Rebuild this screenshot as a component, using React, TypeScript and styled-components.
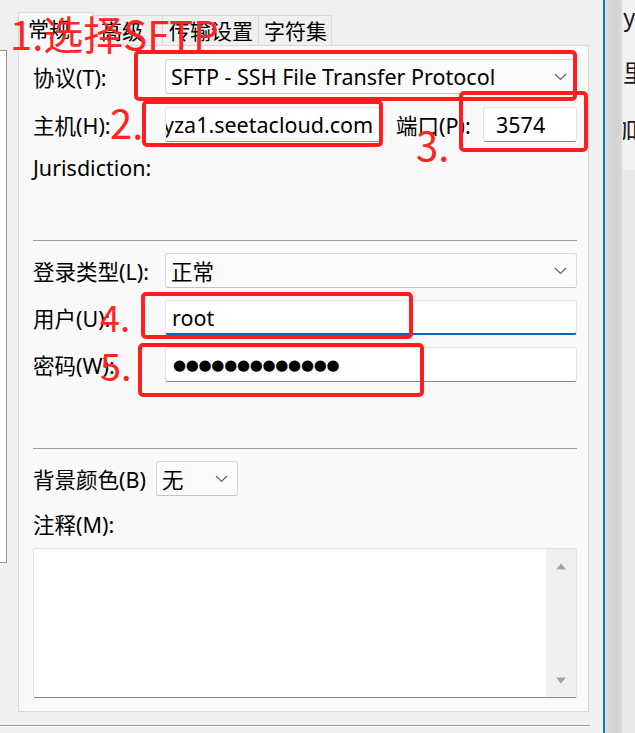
import React from "react";
import styled, { createGlobalStyle } from "styled-components";

const GlobalStyle = createGlobalStyle`
  html, body { margin: 0; padding: 0; background: #f0f0f0; }
  body { font-family: "Noto Sans", "Noto Sans CJK SC", sans-serif; color: #000; }
  * { box-sizing: border-box; }
`;

const Screen = styled.div`
  position: relative;
  width: 635px;
  height: 733px;
  overflow: hidden;
  display: flex;
  background: #f0f0f0;
`;

const Dialog = styled.div`
  width: 603px;
  flex: none;
  display: flex;
  flex-direction: column;
`;

const Body = styled.div`
  display: flex;
  align-items: flex-start;
`;

const Stub = styled.div`
  width: 7px;
  height: 513px;
  margin-top: 50px;
  background: #ffffff;
  border: 1px solid #8f8f8f;
  border-left: none;
`;

const TabArea = styled.div`
  width: 571px;
  margin-left: 11px;
  padding-top: 12px;
  display: flex;
  flex-direction: column;
`;

const TabStrip = styled.div`
  display: flex;
  align-items: flex-end;
  height: 34px;
  margin-bottom: -1px;
  position: relative;
  z-index: 1;
`;

const Tab = styled.div<{ $active?: boolean; $w: number; $pad: number }>`
  width: ${(p) => p.$w}px;
  height: ${(p) => (p.$active ? 34 : 31)}px;
  display: flex;
  align-items: center;
  padding-left: ${(p) => p.$pad}px;
  padding-bottom: ${(p) => (p.$active ? 4 : 2)}px;
  font-size: 21px;
  white-space: nowrap;
  background: ${(p) => (p.$active ? "#f9f9f9" : "#f0f0f0")};
  border: 1px solid #d9d9d9;
  border-left: ${(p) => (p.$active ? "1px solid #d9d9d9" : "none")};
  border-bottom: ${(p) => (p.$active ? "none" : "1px solid #d9d9d9")};
`;

const Panel = styled.div`
  height: 667px;
  background: #f9f9f9;
  border: 1px solid #d9d9d9;
  padding: 13px 11px 0 14px;
  display: flex;
  flex-direction: column;
`;

const Row = styled.div<{ $mt?: number }>`
  display: flex;
  align-items: center;
  height: 35px;
  margin-top: ${(p) => p.$mt ?? 0}px;
`;

const Label = styled.div<{ $w?: number; $ml?: number }>`
  font-size: 21.5px;
  white-space: nowrap;
  width: ${(p) => (p.$w ? `${p.$w}px` : "auto")};
  margin-left: ${(p) => p.$ml ?? 0}px;
  flex: none;
`;

const Combo = styled.div<{ $w: number }>`
  width: ${(p) => p.$w}px;
  height: 35px;
  display: flex;
  align-items: center;
  justify-content: space-between;
  padding: 0 9px 0 5px;
  background: #fbfbfb;
  border: 1px solid #d8d8d8;
  border-bottom-color: #c4c4c4;
  border-radius: 3px;
  font-size: 21.5px;
  white-space: nowrap;
`;

const TextBox = styled.div<{ $w: number; $pad?: number; $focused?: boolean }>`
  width: ${(p) => p.$w}px;
  height: 35px;
  display: flex;
  align-items: center;
  overflow: hidden;
  padding: 0 4px 0 ${(p) => p.$pad ?? 6}px;
  background: #ffffff;
  border: 1px solid #e3e3e3;
  border-bottom: ${(p) => (p.$focused ? "2px solid #0067c0" : "1px solid #8a8a8a")};
  border-radius: 3px;
  font-size: 21.5px;
  white-space: nowrap;
`;

const Scrolled = styled.span<{ $shift: number }>`
  margin-left: ${(p) => p.$shift}px;
`;

const Dots = styled.span`
  font-family: "DejaVu Sans", sans-serif;
  font-size: 15px;
  letter-spacing: -0.3px;
  margin-left: 1px;
`;

const Separator = styled.div<{ $mt: number }>`
  margin-top: ${(p) => p.$mt}px;
  height: 2px;
  border-top: 1px solid #a0a0a0;
  border-bottom: 1px solid #ffffff;
`;

const TextArea = styled.div`
  margin-top: 7px;
  height: 150px;
  background: #ffffff;
  border: 1px solid #e3e3e3;
  border-bottom: 1px solid #868686;
  border-radius: 2px;
  display: flex;
  justify-content: flex-end;
`;

const ScrollBar = styled.div`
  width: 30px;
  background: #f0f0f0;
  display: flex;
  flex-direction: column;
  justify-content: space-between;
  align-items: center;
  padding: 13px 0 12px;
`;

const BottomRule = styled.div`
  width: 590px;
  margin-top: 13px;
  height: 2px;
  border-top: 1px solid #a0a0a0;
  border-bottom: 1px solid #ffffff;
`;

const BlueEdge = styled.div`
  width: 2px;
  flex: none;
  background: #0078d4;
`;

const BackWindow = styled.div`
  flex: 1;
  display: flex;
`;

const Shadow = styled.div`
  width: 17px;
  background: linear-gradient(to right, #dcdcdc, #d2d2d2 70%, #dadada);
`;

const Peek = styled.div`
  flex: 1;
  overflow: hidden;
  background: linear-gradient(to bottom, #f2f2f2 0, #f2f2f2 170px, #e7e7e7 170px);
  border-left: 1px solid #ececec;
  display: flex;
  flex-direction: column;
  padding-top: 2px;
  gap: 28px;
  font-family: "Noto Sans CJK SC", sans-serif;
  font-size: 24px;
  line-height: 28px;
  color: #1a1a1a;
`;

const PeekLine = styled.div<{ $shift?: number }>`
  margin-left: ${(p) => p.$shift ?? 0}px;
  white-space: nowrap;
`;

const Overlay = styled.div`
  position: absolute;
  inset: 0;
  pointer-events: none;
  z-index: 5;
`;

const RedBox = styled.div<{ $x: number; $y: number; $w: number; $h: number }>`
  position: absolute;
  left: ${(p) => p.$x}px;
  top: ${(p) => p.$y}px;
  width: ${(p) => p.$w}px;
  height: ${(p) => p.$h}px;
  border: 4px solid #ff1d1d;
  border-radius: 5px;
`;

const RedNote = styled.div<{ $x: number; $y: number; $size: number }>`
  position: absolute;
  left: ${(p) => p.$x}px;
  top: ${(p) => p.$y}px;
  font-family: "Noto Sans CJK SC", sans-serif;
  font-size: ${(p) => p.$size}px;
  line-height: 1;
  color: #ff2424;
  white-space: nowrap;
`;

const Chevron = () => (
  <svg width="13" height="8" viewBox="0 0 13 8">
    <polyline points="1,1 6.5,6.5 12,1" fill="none" stroke="#606060" strokeWidth="1.1" />
  </svg>
);

const Arrow = ({ up }: { up?: boolean }) => (
  <svg width="12" height="8" viewBox="0 0 12 8">
    <polygon points={up ? "1,7.5 6,1.5 11,7.5" : "1,0.5 11,0.5 6,6.5"} fill="#a3a3a3" />
  </svg>
);

export default function App() {
  return (
    <>
      <GlobalStyle />
      <Screen>
        <Dialog>
          <Body>
            <Stub />
            <TabArea>
              <TabStrip>
                <Tab $active $w={75} $pad={9}>常规</Tab>
                <Tab $w={70} $pad={8}>高级</Tab>
                <Tab $w={96} $pad={6}>传输设置</Tab>
                <Tab $w={73} $pad={5}>字符集</Tab>
              </TabStrip>
              <Panel>
                <Row>
                  <Label $w={132}>协议(T):</Label>
                  <Combo $w={412}>
                    <span>SFTP - SSH File Transfer Protocol</span>
                    <Chevron />
                  </Combo>
                </Row>
                <Row $mt={13}>
                  <Label $w={132}>主机(H):</Label>
                  <TextBox $w={215} $pad={0}>
                    <Scrolled $shift={-3}>yza1.seetacloud.com</Scrolled>
                  </TextBox>
                  <Label $w={87} $ml={16}>端口(P):</Label>
                  <TextBox $w={94} $pad={12}>3574</TextBox>
                </Row>
                <Row $mt={8}>
                  <Label>Jurisdiction:</Label>
                </Row>
                <Separator $mt={55} />
                <Row $mt={11}>
                  <Label $w={132}>登录类型(L):</Label>
                  <Combo $w={412}>
                    <span>正常</span>
                    <Chevron />
                  </Combo>
                </Row>
                <Row $mt={12}>
                  <Label $w={132}>用户(U):</Label>
                  <TextBox $w={412} $focused>root</TextBox>
                </Row>
                <Row $mt={12}>
                  <Label $w={132}>密码(W):</Label>
                  <TextBox $w={412}>
                    <Dots>●●●●●●●●●●●●●</Dots>
                  </TextBox>
                </Row>
                <Separator $mt={66} />
                <Row $mt={11}>
                  <Label $w={123}>背景颜色(B)</Label>
                  <Combo $w={82}>
                    <span>无</span>
                    <Chevron />
                  </Combo>
                </Row>
                <Row $mt={10}>
                  <Label>注释(M):</Label>
                </Row>
                <TextArea>
                  <ScrollBar>
                    <Arrow up />
                    <Arrow />
                  </ScrollBar>
                </TextArea>
              </Panel>
            </TabArea>
          </Body>
          <BottomRule />
        </Dialog>
        <BlueEdge />
        <BackWindow>
          <Shadow />
          <Peek>
            <PeekLine>y</PeekLine>
            <PeekLine>里</PeekLine>
            <PeekLine $shift={-9}>加</PeekLine>
          </Peek>
        </BackWindow>
        <Overlay>
          <RedBox $x={134} $y={50} $w={443} $h={51} />
          <RedBox $x={142} $y={100} $w={241} $h={47} />
          <RedBox $x={459} $y={91} $w={129} $h={61} />
          <RedBox $x={141} $y={292} $w={272} $h={47} />
          <RedBox $x={138} $y={343} $w={286} $h={54} />
          <RedNote $x={10} $y={13} $size={40}>1.选择SFTP</RedNote>
          <RedNote $x={110} $y={102} $size={40}>2.</RedNote>
          <RedNote $x={416} $y={124} $size={40}>3.</RedNote>
          <RedNote $x={100} $y={298} $size={36}>4.</RedNote>
          <RedNote $x={100} $y={346} $size={38}>5.</RedNote>
        </Overlay>
      </Screen>
    </>
  );
}
